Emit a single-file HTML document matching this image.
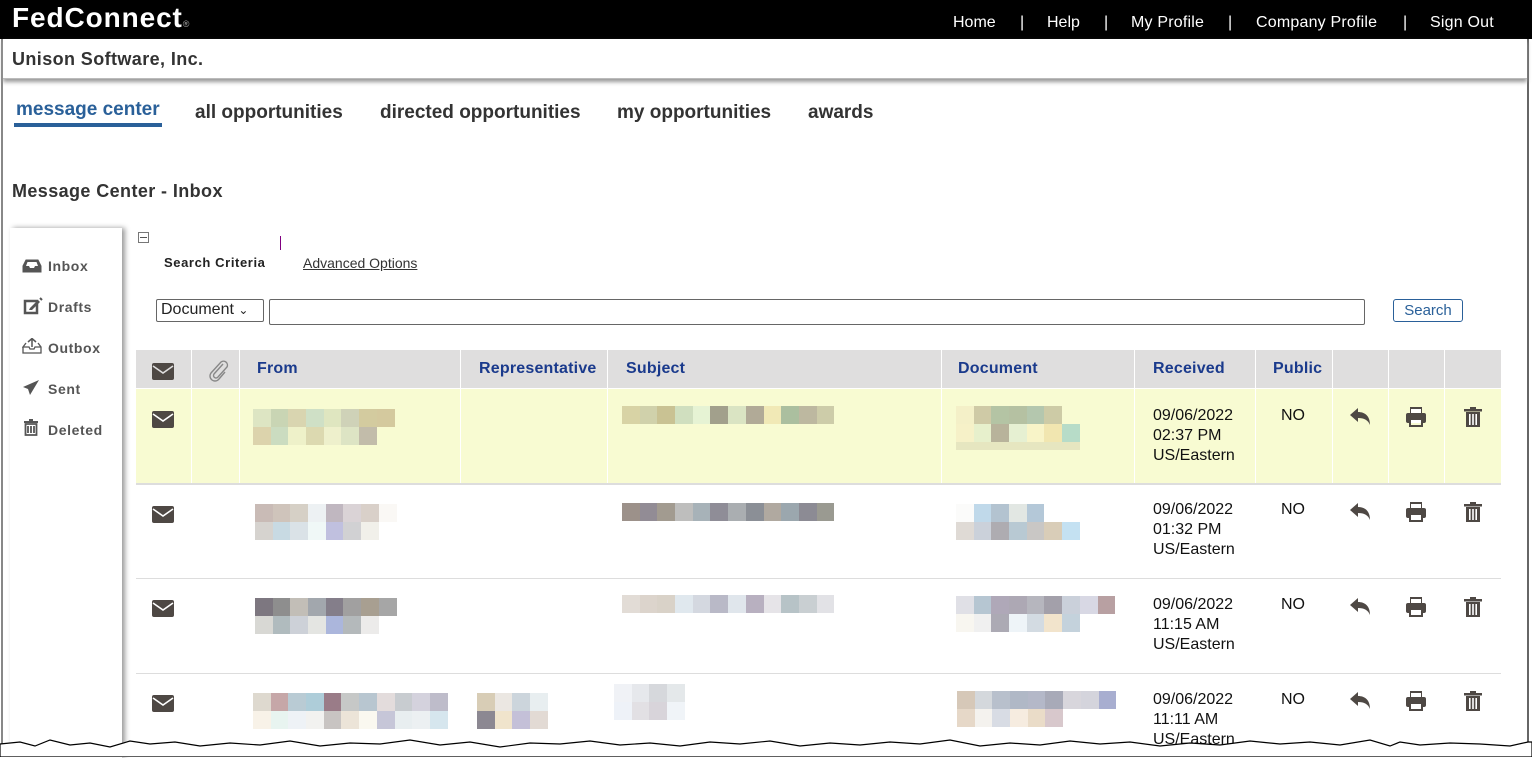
<!DOCTYPE html>
<html><head><meta charset="utf-8"><style>
*{margin:0;padding:0;box-sizing:border-box}
body{width:1532px;height:757px;position:relative;overflow:hidden;background:#fff;font-family:"Liberation Sans",Arial,sans-serif;color:#222}
.a{position:absolute}
.hdr{left:0;top:0;width:1532px;height:39px;background:#000}
.logo{left:12px;top:2px;color:#fff;font-size:28px;font-weight:bold;letter-spacing:0.9px}
.logo sup{font-size:9px;color:#aaa;vertical-align:baseline;font-weight:normal}
.top{color:#fff;font-size:16px;top:14px}
.blk span{display:inline-block;width:17.7px;height:18px;vertical-align:top}
.blk div{height:18px;white-space:nowrap;font-size:0}
.th{color:#1a3a8c;font-weight:bold;font-size:16px;top:360px;letter-spacing:0.2px}
.cell{font-size:16px;color:#111;line-height:20px}
.side{font-size:14px;font-weight:bold;color:#555;left:48px;letter-spacing:0.6px}
</style></head><body>
<div class="a hdr"></div>
<div class="a logo">FedConnect<sup>®</sup></div>
<div class="a top" style="left:953px">Home</div>
<div class="a top" style="left:1020px">|</div>
<div class="a top" style="left:1047px">Help</div>
<div class="a top" style="left:1104px">|</div>
<div class="a top" style="left:1131px;letter-spacing:0.2px">My Profile</div>
<div class="a top" style="left:1228px">|</div>
<div class="a top" style="left:1256px;letter-spacing:0.2px">Company Profile</div>
<div class="a top" style="left:1403px">|</div>
<div class="a top" style="left:1430px;letter-spacing:0.2px">Sign Out</div>
<!-- frame -->
<div class="a" style="left:1px;top:39px;width:2px;height:710px;background:#888"></div>
<div class="a" style="left:1527px;top:39px;width:2px;height:710px;background:#666"></div>
<div class="a" style="left:3px;top:39px;width:1524px;height:40px;border-bottom:1px solid #bbb;box-shadow:0 3px 4px #999"></div>
<div class="a" style="left:12px;top:49px;font-size:18px;font-weight:bold;color:#333;letter-spacing:0.4px">Unison Software, Inc.</div>
<!-- tabs -->
<div class="a" style="left:16px;top:99px;font-size:19px;font-weight:bold;color:#2a6099">message center</div>
<div class="a" style="left:14px;top:123px;width:148px;height:4px;background:#2a6099"></div>
<div class="a" style="left:195px;top:102px;font-size:19px;font-weight:bold;color:#333">all opportunities</div>
<div class="a" style="left:380px;top:102px;font-size:19px;font-weight:bold;color:#333">directed opportunities</div>
<div class="a" style="left:617px;top:102px;font-size:19px;font-weight:bold;color:#333">my opportunities</div>
<div class="a" style="left:808px;top:102px;font-size:19px;font-weight:bold;color:#333">awards</div>
<div class="a" style="left:12px;top:181px;font-size:18px;font-weight:bold;color:#333;letter-spacing:0.4px">Message Center - Inbox</div>
<!-- sidebar -->
<div class="a" style="left:10px;top:228px;width:112px;height:530px;background:#fff;box-shadow:3px 0 5px #999"></div>
<svg class="a" style="left:22px;top:259px" width="20" height="14" viewBox="0 0 20 14"><path d="M1 7 L4 1 H16 L19 7 V13 H1 Z" fill="#555" stroke="#555" stroke-width="1"/><path d="M4 7 H7 L8 9 H12 L13 7 H16 L14.5 3 H5.5 Z" fill="#fff"/></svg>
<div class="a side" style="top:258px">Inbox</div>
<svg class="a" style="left:23px;top:297px" width="20" height="18" viewBox="0 0 20 18"><rect x="2" y="4" width="12" height="12" fill="none" stroke="#555" stroke-width="2.5"/><path d="M7 11 L15 3 L17 5 L9 13 L6 13 Z" fill="#555"/><path d="M17 1 L19 3" stroke="#555" stroke-width="2"/></svg>
<div class="a side" style="top:299px">Drafts</div>
<svg class="a" style="left:22px;top:338px" width="20" height="17" viewBox="0 0 20 17"><path d="M1 9 V15 H19 V9 L16 5 M4 5 L1 9 H7 L8 11 H12 L13 9 H19" fill="none" stroke="#555" stroke-width="1.3"/><path d="M10 1 V9 M6 4 L10 0.5 L14 4" fill="none" stroke="#555" stroke-width="1.5"/></svg>
<div class="a side" style="top:340px">Outbox</div>
<svg class="a" style="left:22px;top:379px" width="18" height="18" viewBox="0 0 18 18"><path d="M17 1 L1 8 L6 10 L8 16 L11 11 Z" fill="#555"/></svg>
<div class="a side" style="top:381px">Sent</div>
<svg class="a" style="left:24px;top:419px" width="14" height="17" viewBox="0 0 14 17"><rect x="0" y="2" width="14" height="2" fill="#555"/><rect x="5" y="0" width="4" height="2" fill="#555"/><path d="M1.5 5 H12.5 V16 H1.5 Z M4 7 V14 M7 7 V14 M10 7 V14" fill="none" stroke="#555" stroke-width="1.8"/></svg>
<div class="a side" style="top:422px">Deleted</div>
<!-- search -->
<div class="a" style="left:138px;top:232px;width:11px;height:11px;border:1px solid #777"></div>
<div class="a" style="left:140px;top:237px;width:7px;height:1px;background:#555"></div>
<div class="a" style="left:280px;top:236px;width:1px;height:14px;background:#800080"></div>
<div class="a" style="left:164px;top:255px;font-size:13px;font-weight:bold;color:#222;letter-spacing:0.6px">Search Criteria</div>
<div class="a" style="left:303px;top:255px;font-size:14px;color:#333;text-decoration:underline">Advanced Options</div>
<div class="a" style="left:156px;top:299px;width:108px;height:23px;border:1px solid #666;border-radius:2px;font-size:16px;padding:1px 4px;color:#222">Document <span style="font-size:12px">&#8964;</span></div>
<div class="a" style="left:269px;top:299px;width:1096px;height:26px;border:1px solid #666;border-radius:2px"></div>
<div class="a" style="left:1393px;top:299px;width:70px;height:23px;border:1px solid #2a6099;border-radius:3px;font-size:15px;color:#2a6099;text-align:center;line-height:21px">Search</div>
<!-- table -->
<div class="a" style="left:136px;top:350px;width:1365px;height:38px;background:#dfdede"></div>
<div class="a" style="left:136px;top:389px;width:1365px;height:94px;background:#f8fbd2"></div>
<div class="a" style="left:136px;top:483px;width:1365px;height:2px;background:#ddd"></div>
<div class="a" style="left:136px;top:578px;width:1365px;height:1px;background:#ddd"></div>
<div class="a" style="left:136px;top:673px;width:1365px;height:1px;background:#ddd"></div>
<div class="a" style="left:191px;top:350px;width:1px;height:133px;background:#fff"></div>
<div class="a" style="left:239px;top:350px;width:1px;height:133px;background:#fff"></div>
<div class="a" style="left:460px;top:350px;width:1px;height:133px;background:#fff"></div>
<div class="a" style="left:607px;top:350px;width:1px;height:133px;background:#fff"></div>
<div class="a" style="left:941px;top:350px;width:1px;height:133px;background:#fff"></div>
<div class="a" style="left:1134px;top:350px;width:1px;height:133px;background:#fff"></div>
<div class="a" style="left:1255px;top:350px;width:1px;height:133px;background:#fff"></div>
<div class="a" style="left:1332px;top:350px;width:1px;height:133px;background:#fff"></div>
<div class="a" style="left:1388px;top:350px;width:1px;height:133px;background:#fff"></div>
<div class="a" style="left:1444px;top:350px;width:1px;height:133px;background:#fff"></div>
<svg class="a" style="left:152px;top:363px" width="22" height="17" viewBox="0 0 22 17"><rect x="0" y="0" width="22" height="17" rx="2" fill="#4e4844"/><path d="M1 3 L11 10 L21 3" fill="none" stroke="#dfdede" stroke-width="1.6"/></svg>
<svg class="a" style="left:207px;top:359px" width="24" height="24" viewBox="0 0 24 24"><path d="M16 5 L7 15 a2.5 2.5 0 0 0 4 3 L20 8 a4 4 0 0 0 -6 -5 L4 14 a5 5 0 0 0 8 6 L18 13" fill="none" stroke="#888" stroke-width="1.4"/></svg>
<div class="a th" style="left:257px">From</div>
<div class="a th" style="left:479px">Representative</div>
<div class="a th" style="left:626px">Subject</div>
<div class="a th" style="left:958px">Document</div>
<div class="a th" style="left:1153px">Received</div>
<div class="a th" style="left:1273px">Public</div>

<!-- rows -->
<div class="a cell" style="left:1153px;top:406px">09/06/2022<br>02:37 PM<br>US/Eastern</div>
<div class="a cell" style="left:1153px;top:500px">09/06/2022<br>01:32 PM<br>US/Eastern</div>
<div class="a cell" style="left:1153px;top:595px">09/06/2022<br>11:15 AM<br>US/Eastern</div>
<div class="a cell" style="left:1153px;top:690px">09/06/2022<br>11:11 AM<br>US/Eastern</div>
<div class="a cell" style="left:1281px;top:406px">NO</div>
<div class="a cell" style="left:1281px;top:500px">NO</div>
<div class="a cell" style="left:1281px;top:595px">NO</div>
<div class="a cell" style="left:1281px;top:690px">NO</div>

<svg width="0" height="0" style="position:absolute"><defs>
<g id="env"><rect x="0" y="0" width="22" height="17" rx="2" fill="#4e4844"/><path d="M1 3 L11 10 L21 3" fill="none" stroke="#fff" stroke-width="1.6"/></g>
<g id="rep"><path d="M0 8 L8 1 V5 C15 5 20 9 20 18 C18 13 14 11 8 11 V15 Z" fill="#4e4844"/></g>
<g id="prt"><rect x="4" y="0" width="12" height="6" fill="#4e4844"/><rect x="0" y="6" width="20" height="10" rx="2" fill="#4e4844"/><rect x="5" y="2" width="10" height="4" fill="#fff"/><rect x="5" y="12" width="10" height="4" fill="#fff"/><rect x="4" y="12" width="12" height="7" fill="none" stroke="#4e4844" stroke-width="2"/></g>
<g id="del"><rect x="0" y="2" width="18" height="2.5" fill="#4e4844"/><rect x="6" y="0" width="6" height="2" fill="#4e4844"/><rect x="2" y="5" width="14" height="15" fill="#4e4844"/><rect x="5" y="7" width="1.6" height="11" fill="#fff"/><rect x="8.2" y="7" width="1.6" height="11" fill="#fff"/><rect x="11.4" y="7" width="1.6" height="11" fill="#fff"/></g>
</defs></svg>
<svg class="a" style="left:152px;top:411px" width="22" height="17"><use href="#env"/></svg>
<svg class="a" style="left:152px;top:506px" width="22" height="17"><use href="#env"/></svg>
<svg class="a" style="left:152px;top:600px" width="22" height="17"><use href="#env"/></svg>
<svg class="a" style="left:152px;top:695px" width="22" height="17"><use href="#env"/></svg>
<svg class="a" style="left:1350px;top:407px" width="21" height="20"><use href="#rep"/></svg>
<svg class="a" style="left:1350px;top:502px" width="21" height="20"><use href="#rep"/></svg>
<svg class="a" style="left:1350px;top:597px" width="21" height="20"><use href="#rep"/></svg>
<svg class="a" style="left:1350px;top:691px" width="21" height="20"><use href="#rep"/></svg>
<svg class="a" style="left:1406px;top:407px" width="21" height="20"><use href="#prt"/></svg>
<svg class="a" style="left:1406px;top:502px" width="21" height="20"><use href="#prt"/></svg>
<svg class="a" style="left:1406px;top:597px" width="21" height="20"><use href="#prt"/></svg>
<svg class="a" style="left:1406px;top:691px" width="21" height="20"><use href="#prt"/></svg>
<svg class="a" style="left:1464px;top:407px" width="18" height="21"><use href="#del"/></svg>
<svg class="a" style="left:1464px;top:502px" width="18" height="21"><use href="#del"/></svg>
<svg class="a" style="left:1464px;top:597px" width="18" height="21"><use href="#del"/></svg>
<svg class="a" style="left:1464px;top:691px" width="18" height="21"><use href="#del"/></svg>

<!-- pixel blocks -->
<div class="a blk" style="left:253px;top:409px"><div><span style="background:#dde5c3"></span><span style="background:#c9d5b4"></span><span style="background:#d9d5b0"></span><span style="background:#cfe0c6"></span><span style="background:#dfe6c0"></span><span style="background:#cfd2b8"></span><span style="background:#d3cb9f"></span><span style="background:#d4c99e"></span></div><div><span style="background:#dcd3ac"></span><span style="background:#cbdcc0"></span><span style="background:#eef1c9"></span><span style="background:#dcd9b0"></span><span style="background:#eef0cc"></span><span style="background:#dde4c4"></span><span style="background:#c2bcaa"></span></div></div>
<div class="a blk" style="left:622px;top:406px"><div><span style="background:#d8d3a5"></span><span style="background:#d0d1ab"></span><span style="background:#c9c293"></span><span style="background:#d0dfbf"></span><span style="background:#e6f3d4"></span><span style="background:#a2a08c"></span><span style="background:#dae4c3"></span><span style="background:#b1aa97"></span><span style="background:#f1e9b6"></span><span style="background:#abbf9f"></span><span style="background:#bdb8a0"></span><span style="background:#cdcca9"></span></div></div>
<div class="a blk" style="left:956px;top:406px"><div><span style="background:#f4f0c8"></span><span style="background:#cfcaa6"></span><span style="background:#b4c4a4"></span><span style="background:#b5c1a2"></span><span style="background:#b4c7ae"></span><span style="background:#cdcba6"></span></div><div><span style="background:#f6f1c8"></span><span style="background:#e7f0cc"></span><span style="background:#b8b39b"></span><span style="background:#e6f0d2"></span><span style="background:#f8f4c8"></span><span style="background:#f1e6b0"></span><span style="background:#b7dcc8"></span></div><div style="height:8px"><span style="background:#e6e6c0;width:124px;height:8px"></span></div></div>

<div class="a blk" style="left:255px;top:504px"><div><span style="background:#c9bbb6"></span><span style="background:#cfc4bb"></span><span style="background:#d6d0c6"></span><span style="background:#edf1f3"></span><span style="background:#c0b7c0"></span><span style="background:#dad3d6"></span><span style="background:#d9d0c9"></span><span style="background:#faf8f5"></span></div><div><span style="background:#d6d3cf"></span><span style="background:#c8dae3"></span><span style="background:#dae2e7"></span><span style="background:#f0f8f7"></span><span style="background:#c0c0df"></span><span style="background:#d1d1d3"></span><span style="background:#f1f0ea"></span></div></div>
<div class="a blk" style="left:622px;top:503px"><div><span style="background:#9c918a"></span><span style="background:#928c95"></span><span style="background:#a29b90"></span><span style="background:#bebebd"></span><span style="background:#a7b2b8"></span><span style="background:#8f8d97"></span><span style="background:#aaaeb1"></span><span style="background:#8b8f96"></span><span style="background:#b0a9a0"></span><span style="background:#9ba7ae"></span><span style="background:#8c8b94"></span><span style="background:#9a9a91"></span></div></div>
<div class="a blk" style="left:956px;top:504px"><div><span style="background:#fbfbfa"></span><span style="background:#c0d9ea"></span><span style="background:#b3c3d0"></span><span style="background:#e2e7e3"></span><span style="background:#b4c8d8"></span></div><div><span style="background:#dfdad5"></span><span style="background:#cbd1da"></span><span style="background:#aeacb1"></span><span style="background:#b8c9d3"></span><span style="background:#c9c7c5"></span><span style="background:#d9cdb8"></span><span style="background:#c4e1f2"></span></div></div>

<div class="a blk" style="left:255px;top:598px"><div><span style="background:#7d7780"></span><span style="background:#8e8e8e"></span><span style="background:#c2beb7"></span><span style="background:#a2a7ad"></span><span style="background:#847e8a"></span><span style="background:#a1a0a0"></span><span style="background:#a89f91"></span><span style="background:#a6a6a6"></span></div><div><span style="background:#d8d8d4"></span><span style="background:#b0bbbe"></span><span style="background:#cdd1d8"></span><span style="background:#e4e5e2"></span><span style="background:#abb6dc"></span><span style="background:#b4b9bb"></span><span style="background:#ecebea"></span></div></div>
<div class="a blk" style="left:622px;top:595px"><div><span style="background:#e2dcd6"></span><span style="background:#dcd4cc"></span><span style="background:#d9d2c8"></span><span style="background:#e0e8ee"></span><span style="background:#d4d8e0"></span><span style="background:#b9b9c7"></span><span style="background:#e0e6ec"></span><span style="background:#b8b0c0"></span><span style="background:#e6e4e8"></span><span style="background:#b7c3c7"></span><span style="background:#c9cfd2"></span><span style="background:#e2e2e6"></span></div></div>
<div class="a blk" style="left:956px;top:596px"><div><span style="background:#e0e0e6"></span><span style="background:#b6c6d2"></span><span style="background:#afa8b8"></span><span style="background:#ada8b4"></span><span style="background:#b6b6be"></span><span style="background:#a3a0aa"></span><span style="background:#cad0da"></span><span style="background:#d8d8e4"></span><span style="background:#b8a0a2"></span></div><div><span style="background:#f8f6f0"></span><span style="background:#f0f0f0"></span><span style="background:#acaab4"></span><span style="background:#eef4f8"></span><span style="background:#d3dbe2"></span><span style="background:#f2e4cc"></span><span style="background:#c4d2dc"></span></div></div>

<div class="a blk" style="left:253px;top:693px"><div><span style="background:#ded9cf"></span><span style="background:#c6a7a8"></span><span style="background:#b9cbd4"></span><span style="background:#aecdd9"></span><span style="background:#9a7c88"></span><span style="background:#c6c8c7"></span><span style="background:#b8c6d0"></span><span style="background:#e3dcdc"></span><span style="background:#c8ccd0"></span><span style="background:#d4d2dd"></span><span style="background:#bebcca"></span></div><div><span style="background:#f8f2e8"></span><span style="background:#e8f4f0"></span><span style="background:#eef2f6"></span><span style="background:#f2f2f0"></span><span style="background:#c8c4c2"></span><span style="background:#ece4d8"></span><span style="background:#faf8f0"></span><span style="background:#c6c6d8"></span><span style="background:#e8eef0"></span><span style="background:#ecf0f2"></span><span style="background:#d6e6ee"></span></div></div>
<div class="a blk" style="left:477px;top:693px"><div><span style="background:#d8cdb6"></span><span style="background:#ebe7e2"></span><span style="background:#ccd5dc"></span><span style="background:#e8eef0"></span></div><div><span style="background:#8c8892"></span><span style="background:#f0e4cc"></span><span style="background:#c4c0d8"></span><span style="background:#e2dad4"></span></div></div>
<div class="a blk" style="left:614px;top:684px"><div><span style="background:#f0f2f6"></span><span style="background:#e6e8ec"></span><span style="background:#d6d8dc"></span><span style="background:#e4e8ea"></span></div><div><span style="background:#eef2f8"></span><span style="background:#e2e0e4"></span><span style="background:#d8d4da"></span><span style="background:#f0f4f8"></span></div></div>
<div class="a blk" style="left:957px;top:691px"><div><span style="background:#d6c8b8"></span><span style="background:#d4d8dc"></span><span style="background:#b8c0cc"></span><span style="background:#b0b8c6"></span><span style="background:#b4b8c8"></span><span style="background:#a8aab8"></span><span style="background:#d8d6dc"></span><span style="background:#d4d4dc"></span><span style="background:#a8aed0"></span></div><div><span style="background:#e6d8c8"></span><span style="background:#f4f2ee"></span><span style="background:#d8dce4"></span><span style="background:#f6ece0"></span><span style="background:#eadcc8"></span><span style="background:#d8c8cc"></span></div></div>

<!-- torn edge -->
<svg class="a" style="left:0;top:734px" width="1532" height="23" viewBox="0 0 1532 23"><path d="M0 10 L20 8 L35 12 L50 6 L70 11 L90 9 L110 13 L130 7 L150 10 L175 8 L200 12 L230 9 L260 11 L290 7 L320 12 L350 9 L380 10 L410 6 L440 11 L470 8 L500 13 L530 9 L560 10 L590 7 L620 11 L650 9 L680 12 L710 8 L740 10 L770 7 L800 12 L830 9 L860 11 L890 8 L920 10 L950 6 L980 12 L1010 9 L1040 11 L1070 7 L1100 10 L1130 8 L1160 12 L1190 9 L1220 11 L1250 7 L1280 10 L1310 8 L1340 11 L1370 6 L1390 12 L1400 8 L1420 11 L1450 9 L1480 10 L1510 12 L1528 8 L1532 8 V23 H0 Z" fill="#fff" stroke="#000" stroke-width="1.2"/></svg>
</body></html>
